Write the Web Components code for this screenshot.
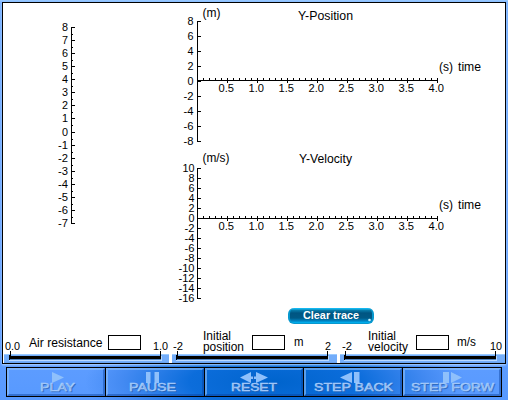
<!DOCTYPE html>
<html lang="en"><head><meta charset="utf-8"><title>Motion simulation</title>
<style>
html,body{margin:0;width:508px;height:400px;overflow:hidden}
body{font-family:"Liberation Sans",Arial,sans-serif;color:#000}
</style></head><body>
<motion-lab></motion-lab>
<script>
const define = (name, render) => customElements.define(name, class extends HTMLElement {
  connectedCallback() {
    if (this.shadowRoot) return;
    this.attachShadow({mode: 'open'}).innerHTML = render(this);
  }
});
const t = (x, y, w, s, size = 12) =>
  `<text x="${x}" y="${y}" textLength="${w}" lengthAdjust="spacingAndGlyphs" font-size="${size}">${s}</text>`;
const r = (x, y, w, h) => `<rect x="${x}" y="${y}" width="${w}" height="${h}"/>`;
const numW = s => [...String(s)].reduce((a, c) => a + (c === '-' ? 4 : c === '.' ? 3 : 6), 0);
const num = (right, y, s) => t(right - numW(s), y, numW(s), s, 10);

define('ruler-axis', () => {
  let g = r(10, 7, 1, 197);
  for (let i = 0; i <= 15; i++) {
    const y = 7 + Math.round(i * 196 / 15);
    g += r(10, y, 4, 1) + num(7, y + 3.5, 8 - i);
    if (i < 15) g += r(11, y + 7, 1, 1);
  }
  return `<style>:host{display:block;width:40px;height:220px}svg{display:block;overflow:visible;shape-rendering:crispEdges}</style><svg width="40" height="220">${g}</svg>`;
});

define('time-chart', el => {
  const a = n => +el.getAttribute(n);
  const max = a('max'), min = a('min'), step = a('step'), top = a('top'), zero = a('zero');
  const h = (max - min) / 2 * step;
  let g = r(27, top, 1, h + 1) + r(27, zero, 241, 1);
  for (let v = max, y = top; v >= min; v -= 2, y += step) g += r(27, y, 4, 1) + num(a('num-x'), y + 4, v);
  for (let i = 1; i <= 40; i++) {
    const x = 27 + i * 6;
    g += i % 5 ? r(x, zero - 2, 1, 2) : r(x, zero - 2, 1, 5);
    if (i % 5 === 0) g += t(x - 8.5, zero + 12, 15.5, (i / 10).toFixed(1), 10);
  }
  g += t(32.5, a('unit-y'), a('unit-w'), el.getAttribute('unit'));
  g += t(a('title-x'), a('title-y'), a('title-w'), el.getAttribute('label'));
  g += t(269, zero - 9, 14, '(s)') + t(288, zero - 9, 23, 'time');
  return `<style>:host{display:block;height:${a('height')}px}svg{display:block;overflow:visible;shape-rendering:crispEdges}</style><svg width="330" height="${a('height')}">${g}</svg>`;
});

define('clear-button', () => `<style>
:host{display:block;box-sizing:border-box;width:86px;height:16px;border-radius:6px;
background:linear-gradient(#14b8f0 0 1px,#087fae 2px,#005582 5px,#005986 10px,#0085c4 13px,#00b8f8);
border:solid #0798ce;border-width:0 2px 1px}
svg{display:block;overflow:visible}text{fill:#fff;font-weight:bold}</style><svg width="82" height="15"><text x="13" y="11" textLength="56" lengthAdjust="spacingAndGlyphs" font-size="11">Clear trace</text><circle cx="79.500" cy="12" r="1.300" fill="#c8f4ff"/></svg>`);

define('value-slider', el => {
  const b = n => el.getAttribute(n);
  return `<style>
:host{display:flex;flex-direction:column;height:37px;width:${b('width')}px}
.info{display:grid;grid-template-columns:${b('cols')};height:28px;box-sizing:border-box;padding-left:${b('pad')}px}
svg{display:block;overflow:visible}
.box{box-sizing:border-box;width:33px;height:15px;margin-top:9px;border:1px solid #000;background:#fff}
.track{height:9px;box-sizing:border-box;padding:0 ${b('end')}px 0 ${b('start')}px;margin-left:${b('left')}px;margin-right:${b('right')}px;background:linear-gradient(#9bcaff 0 1px,#73adfa 1px 8px,#609be9);position:relative}
.a,.z{position:absolute;top:-3px;width:1px;height:5px;background:#000}.a{left:${+b('start')+1}px}.z{right:${+b('end')+1}px}
.bar{height:7px;box-sizing:border-box;margin-top:1px;background:linear-gradient(transparent 0 1px,#000 1px 4px,#4e84c5 4px 5px,#b9d9ff 5px 6px,transparent 6px)}
.track{display:flow-root}
.bar::before{content:"";display:block;width:1px;height:5px;background:#000}
.bar::after{content:"";display:block;margin:-4px 0 0 auto;width:1px;height:5px;background:#b9d9ff}
</style><div class="info">
<svg width="2" height="28">${t(0, 24, numW(b('min')), b('min'), 10)}</svg>
<svg width="2" height="28">${b('second') ? t(0, 14, 28, b('label')) + t(0, 24.5, b('second-w'), b('second')) : t(0, 20.5, 73.5, b('label'))}</svg>
<div class="box"></div>
<svg width="2" height="28">${b('unit') ? t(0, 20, b('unit-w'), b('unit')) : ''}</svg>
<svg width="2" height="28">${t(0, 24, numW(b('max')), b('max'), 10)}</svg>
</div><div class="track"><i class="a"></i><i class="z"></i><div class="bar"></div></div>`;
});

define('control-button', el => {
  const icons = {
    play: '<path d="M46 5L58 10.500L46 16Z"/>',
    pause: '<path d="M41 5H45.500V16H41ZM49.500 5H54V16H49.500Z"/>',
    reset: '<path d="M36 10.500L47 5V9.500H52V5L64 10.500L52 16V12H47V16Z"/><path d="M49.500 6V15" stroke="#1765c8"/>',
    back: '<path d="M37 10.500L49 5V16ZM51 5H56.500V16H51Z"/>',
    forward: '<path d="M41 5H47V16H41ZM49 5L60 10.500L49 16Z"/>'
  };
  return `<style>:host{display:block;flex:0 0 99px;min-width:0;box-sizing:border-box;border:1px solid #000;border-right-width:0}
:host(:last-child){flex-basis:100px;border-right-width:1px}
.face{height:100%;box-sizing:border-box;border:2px solid;border-color:#91c2fb99 #073e9970 #073e9970 #91c2fb99}
svg{display:block;overflow:visible;margin:-3px 0 0 -3px;fill:#8fc0fb}
text{fill:#a5cbfc;text-shadow:1px 1px #275fac90}</style>
<div class="face"><svg width="98" height="29">${icons[el.getAttribute('icon')]}<text x="${el.getAttribute('x')}" y="24" textLength="${el.getAttribute('w')}" lengthAdjust="spacingAndGlyphs" font-size="11.5" stroke="#a5cbfc" stroke-width=".5">${el.getAttribute('label')}</text></svg></div>`;
});

define('motion-lab', () => `<style>
:host{display:flex;flex-direction:column;box-sizing:border-box;width:508px;height:400px;padding:2px 2px 0;
background:radial-gradient(ellipse 190px 55px at 275px 382px,#0064cd 0,#0c6ddb 45%,#438af2 80%,transparent 100%),linear-gradient(#9bcbff 0,#78b0ff 3px,#69a3ff 300px,#5799ff 400px)}
.panel{box-sizing:border-box;width:504px;height:362px;background:#fff;border:1px solid #000;display:flex;flex-direction:column;box-shadow:0 1px 2px #b6d8ff}
.plots{display:flex;height:324px;box-sizing:border-box}
.left{padding:17px 0 0 58px;width:167px;box-sizing:border-box}
.clear{padding-left:118px}
.sliders{display:flex;margin-top:-1px}
.controls{display:flex;width:496px;height:30px;margin:3px 0 0 4px}
</style>
<section class="panel"><div class="plots"><div class="left"><ruler-axis></ruler-axis></div>
<div><time-chart height="148" top="18" zero="77" max="8" min="-8" step="15" num-x="23.5" unit="(m)" unit-y="14" unit-w="18" label="Y-Position" title-x="128" title-y="17" title-w="55"></time-chart>
<time-chart height="157" top="17" zero="67" max="10" min="-16" step="10" num-x="24.5" unit="(m/s)" unit-y="11" unit-w="27" label="Y-Velocity" title-x="129" title-y="12" title-w="53"></time-chart>
<div class="clear"><clear-button></clear-button></div></div></div>
<div class="sliders">
<value-slider width="167" cols="24px 79px 44px 1px 1fr" pad="2" min="0.0" max="1.0" label="Air resistance" left="1" right="1" start="5" end="7"></value-slider>
<value-slider width="168" cols="30px 49px 42px 31px 1fr" pad="3" min="-2" max="2" label="Initial" second="position" second-w="41" unit="m" unit-w="9.5" left="2" right="1" start="4" end="8"></value-slider>
<value-slider width="167" cols="26px 48px 41px 33px 1fr" pad="4" min="-2" max="10" label="Initial" second="velocity" second-w="40" unit="m/s" unit-w="19" left="2" right="0" start="4" end="8"></value-slider>
</div></section>
<nav class="controls">
<control-button icon="play" label="PLAY" x="34" w="35"></control-button>
<control-button icon="pause" label="PAUSE" x="24" w="47"></control-button>
<control-button icon="reset" label="RESET" x="27" w="46"></control-button>
<control-button icon="back" label="STEP BACK" x="11" w="79"></control-button>
<control-button icon="forward" label="STEP FORW" x="9" w="83"></control-button>
</nav>`);
</script></body></html>
